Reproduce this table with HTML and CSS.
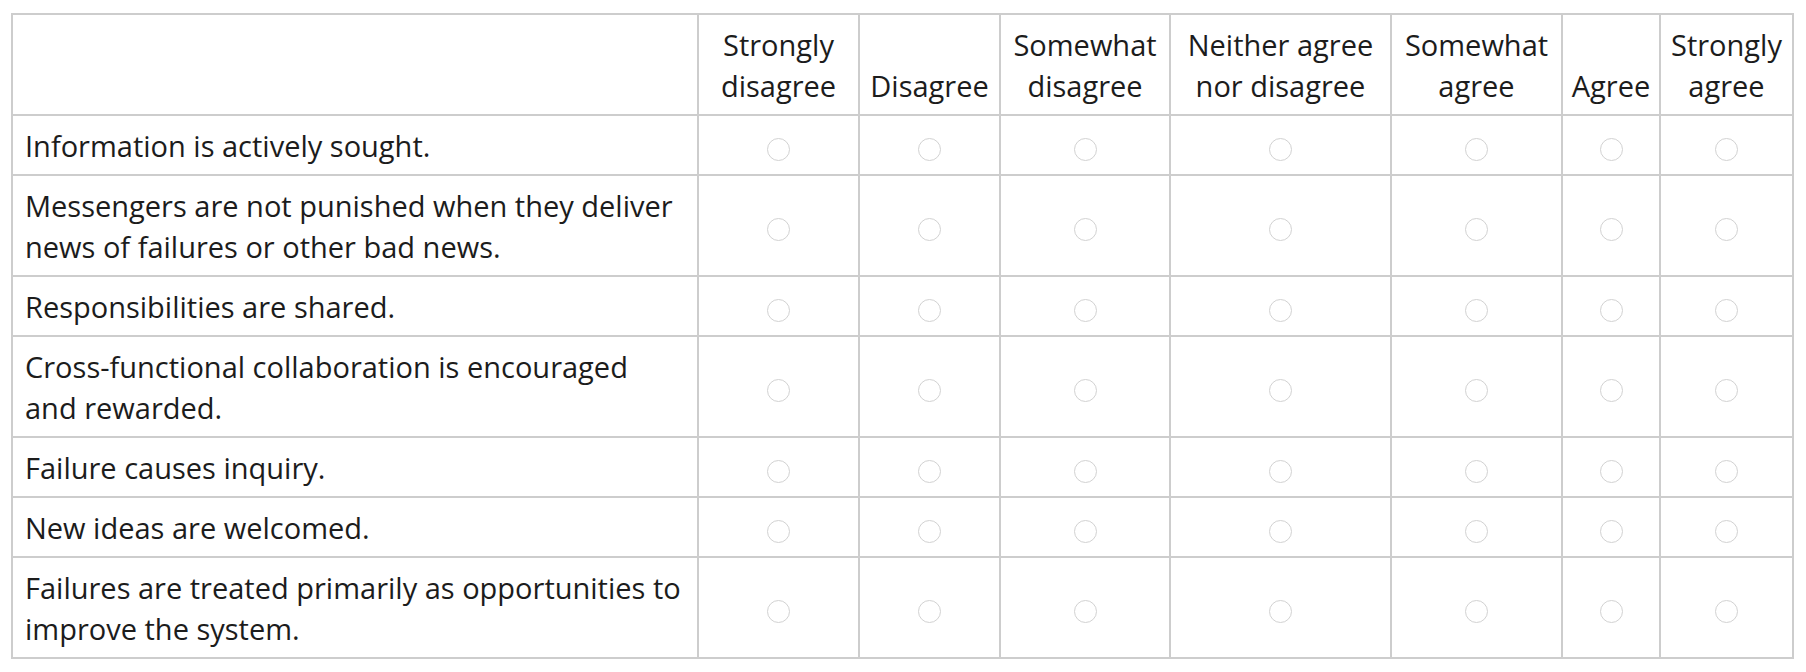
FILE: index.html
```html
<!DOCTYPE html>
<html lang="en">
<head>
<meta charset="utf-8">
<title>Survey</title>
<link rel="stylesheet" href="styles.css">
</head>
<body>
<div class="wrap">
<table class="likert">
  <colgroup>
    <col class="c-q">
    <col class="c1"><col class="c2"><col class="c3"><col class="c4"><col class="c5"><col class="c6"><col class="c7">
  </colgroup>
  <thead>
    <tr>
      <th></th>
      <th>Strongly<br>disagree</th>
      <th>Disagree</th>
      <th>Somewhat<br>disagree</th>
      <th>Neither agree<br>nor disagree</th>
      <th>Somewhat<br>agree</th>
      <th>Agree</th>
      <th>Strongly<br>agree</th>
    </tr>
  </thead>
  <tbody>
    <tr>
      <td class="q">Information is actively sought.</td>
      <td><span class="radio"></span></td><td><span class="radio"></span></td><td><span class="radio"></span></td><td><span class="radio"></span></td><td><span class="radio"></span></td><td><span class="radio"></span></td><td><span class="radio"></span></td>
    </tr>
    <tr>
      <td class="q">Messengers are not punished when they deliver news of failures or other bad news.</td>
      <td><span class="radio"></span></td><td><span class="radio"></span></td><td><span class="radio"></span></td><td><span class="radio"></span></td><td><span class="radio"></span></td><td><span class="radio"></span></td><td><span class="radio"></span></td>
    </tr>
    <tr>
      <td class="q">Responsibilities are shared.</td>
      <td><span class="radio"></span></td><td><span class="radio"></span></td><td><span class="radio"></span></td><td><span class="radio"></span></td><td><span class="radio"></span></td><td><span class="radio"></span></td><td><span class="radio"></span></td>
    </tr>
    <tr>
      <td class="q">Cross-functional collaboration is encouraged and rewarded.</td>
      <td><span class="radio"></span></td><td><span class="radio"></span></td><td><span class="radio"></span></td><td><span class="radio"></span></td><td><span class="radio"></span></td><td><span class="radio"></span></td><td><span class="radio"></span></td>
    </tr>
    <tr>
      <td class="q">Failure causes inquiry.</td>
      <td><span class="radio"></span></td><td><span class="radio"></span></td><td><span class="radio"></span></td><td><span class="radio"></span></td><td><span class="radio"></span></td><td><span class="radio"></span></td><td><span class="radio"></span></td>
    </tr>
    <tr>
      <td class="q">New ideas are welcomed.</td>
      <td><span class="radio"></span></td><td><span class="radio"></span></td><td><span class="radio"></span></td><td><span class="radio"></span></td><td><span class="radio"></span></td><td><span class="radio"></span></td><td><span class="radio"></span></td>
    </tr>
    <tr>
      <td class="q">Failures are treated primarily as opportunities to improve the system.</td>
      <td><span class="radio"></span></td><td><span class="radio"></span></td><td><span class="radio"></span></td><td><span class="radio"></span></td><td><span class="radio"></span></td><td><span class="radio"></span></td><td><span class="radio"></span></td>
    </tr>
  </tbody>
</table>
</div>
</body>
</html>
```
FILE: styles.css
```css
html, body {
  margin: 0;
  padding: 0;
  background: #ffffff;
}

.wrap {
  padding: 13px 0 0 11px;
}

.likert {
  width: 1781px;
  border-collapse: collapse;
  table-layout: fixed;
  font-family: "Open Sans", "Liberation Sans", sans-serif;
  font-size: 29px;
  line-height: 41px;
  color: #1c1c1c;
  border: 2px solid #cdcdcd;
}

.c-q { width: 686px; }
.c1 { width: 161px; }
.c2 { width: 141px; }
.c3 { width: 170px; }
.c4 { width: 221px; }
.c5 { width: 171px; }
.c6 { width: 98px; }
.c7 { width: 133px; }

.likert th,
.likert td {
  border: 2px solid #cdcdcd;
  padding: 9px 4px 8px;
}

.likert th {
  font-weight: 400;
  text-align: center;
  vertical-align: bottom;
  white-space: nowrap;
}

.likert td {
  text-align: center;
  vertical-align: middle;
}

.likert td.q {
  text-align: left;
  padding-left: 12px;
  padding-right: 14px;
}

.radio {
  display: inline-block;
  width: 23px;
  height: 23px;
  border: 1.5px solid #d2d2d2;
  border-radius: 50%;
  vertical-align: middle;
  box-sizing: border-box;
  background: #fff;
}
```
